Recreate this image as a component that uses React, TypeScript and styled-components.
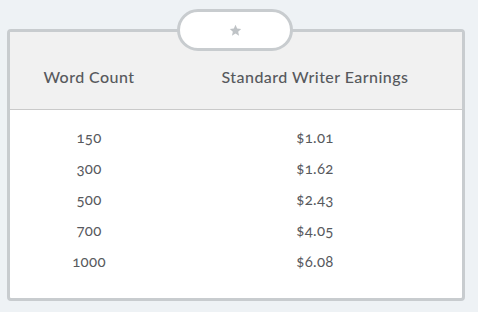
import styled, { createGlobalStyle } from 'styled-components';

const GlobalStyle = createGlobalStyle`
  html, body {
    margin: 0;
    padding: 0;
    background: #eef2f5;
  }
  body {
    font-family: Lato, "Open Sans", sans-serif;
  }
`;

const StyledPage = styled.main`
  padding: 29px 13px 10px 7px;
`;

const StyledCard = styled.section`
  position: relative;
  background: #ffffff;
  border: 3px solid #c8cccf;
  border-radius: 4px;
`;

const StyledBadge = styled.div`
  position: absolute;
  left: 167px;
  top: -23px;
  width: 110px;
  height: 36px;
  box-sizing: content-box;
  border: 3px solid #c8cccf;
  border-radius: 22px;
  background: #ffffff;
  display: grid;
  place-content: center;
`;

const StyledTable = styled.table`
  width: 100%;
  border-collapse: collapse;
  color: #57595d;
  font-variant-numeric: oldstyle-nums;
`;

const StyledHead = styled.thead`
  background: #f1f1f1;
`;

const StyledTh = styled.th<{ $width?: string }>`
  width: ${(props) => props.$width ?? 'auto'};
  height: 77px;
  padding: 12px 0 0;
  box-sizing: border-box;
  border-bottom: 1px solid #cacaca;
  font-size: 16px;
  font-weight: 500;
  text-align: center;
  letter-spacing: 0.45px;
`;

const StyledTd = styled.td`
  height: 31px;
  padding: 0;
  font-size: 15px;
  text-align: center;
  letter-spacing: 0.3px;
`;

const StyledSpacer = styled.td`
  height: 12px;
  padding: 0;
`;

const StyledBottom = styled.td`
  height: 21px;
  padding: 0;
`;

const ROWS = [
  ['150', '$1.01'],
  ['300', '$1.62'],
  ['500', '$2.43'],
  ['700', '$4.05'],
  ['1000', '$6.08'],
];

const Star = () => (
  <svg width="13" height="13" viewBox="0 0 24 24" aria-hidden>
    <path
      fill="#bfc3c6"
      d="M12 1.5l3.1 6.9 7.4.7-5.6 5 1.7 7.4L12 17.6l-6.6 3.9 1.7-7.4-5.6-5 7.4-.7z"
    />
  </svg>
);

const App = () => {
  return (
    <>
      <GlobalStyle />
      <StyledPage>
        <StyledCard>
          <StyledBadge>
            <Star />
          </StyledBadge>
          <StyledTable>
            <StyledHead>
              <tr>
                <StyledTh $width="158px">Word Count</StyledTh>
                <StyledTh>Standard Writer Earnings</StyledTh>
              </tr>
            </StyledHead>
            <tbody>
              <tr>
                <StyledSpacer colSpan={2} />
              </tr>
              {ROWS.map(([count, earnings]) => (
                <tr key={count}>
                  <StyledTd>{count}</StyledTd>
                  <StyledTd>{earnings}</StyledTd>
                </tr>
              ))}
              <tr>
                <StyledBottom colSpan={2} />
              </tr>
            </tbody>
          </StyledTable>
        </StyledCard>
      </StyledPage>
    </>
  );
};

export default App;
